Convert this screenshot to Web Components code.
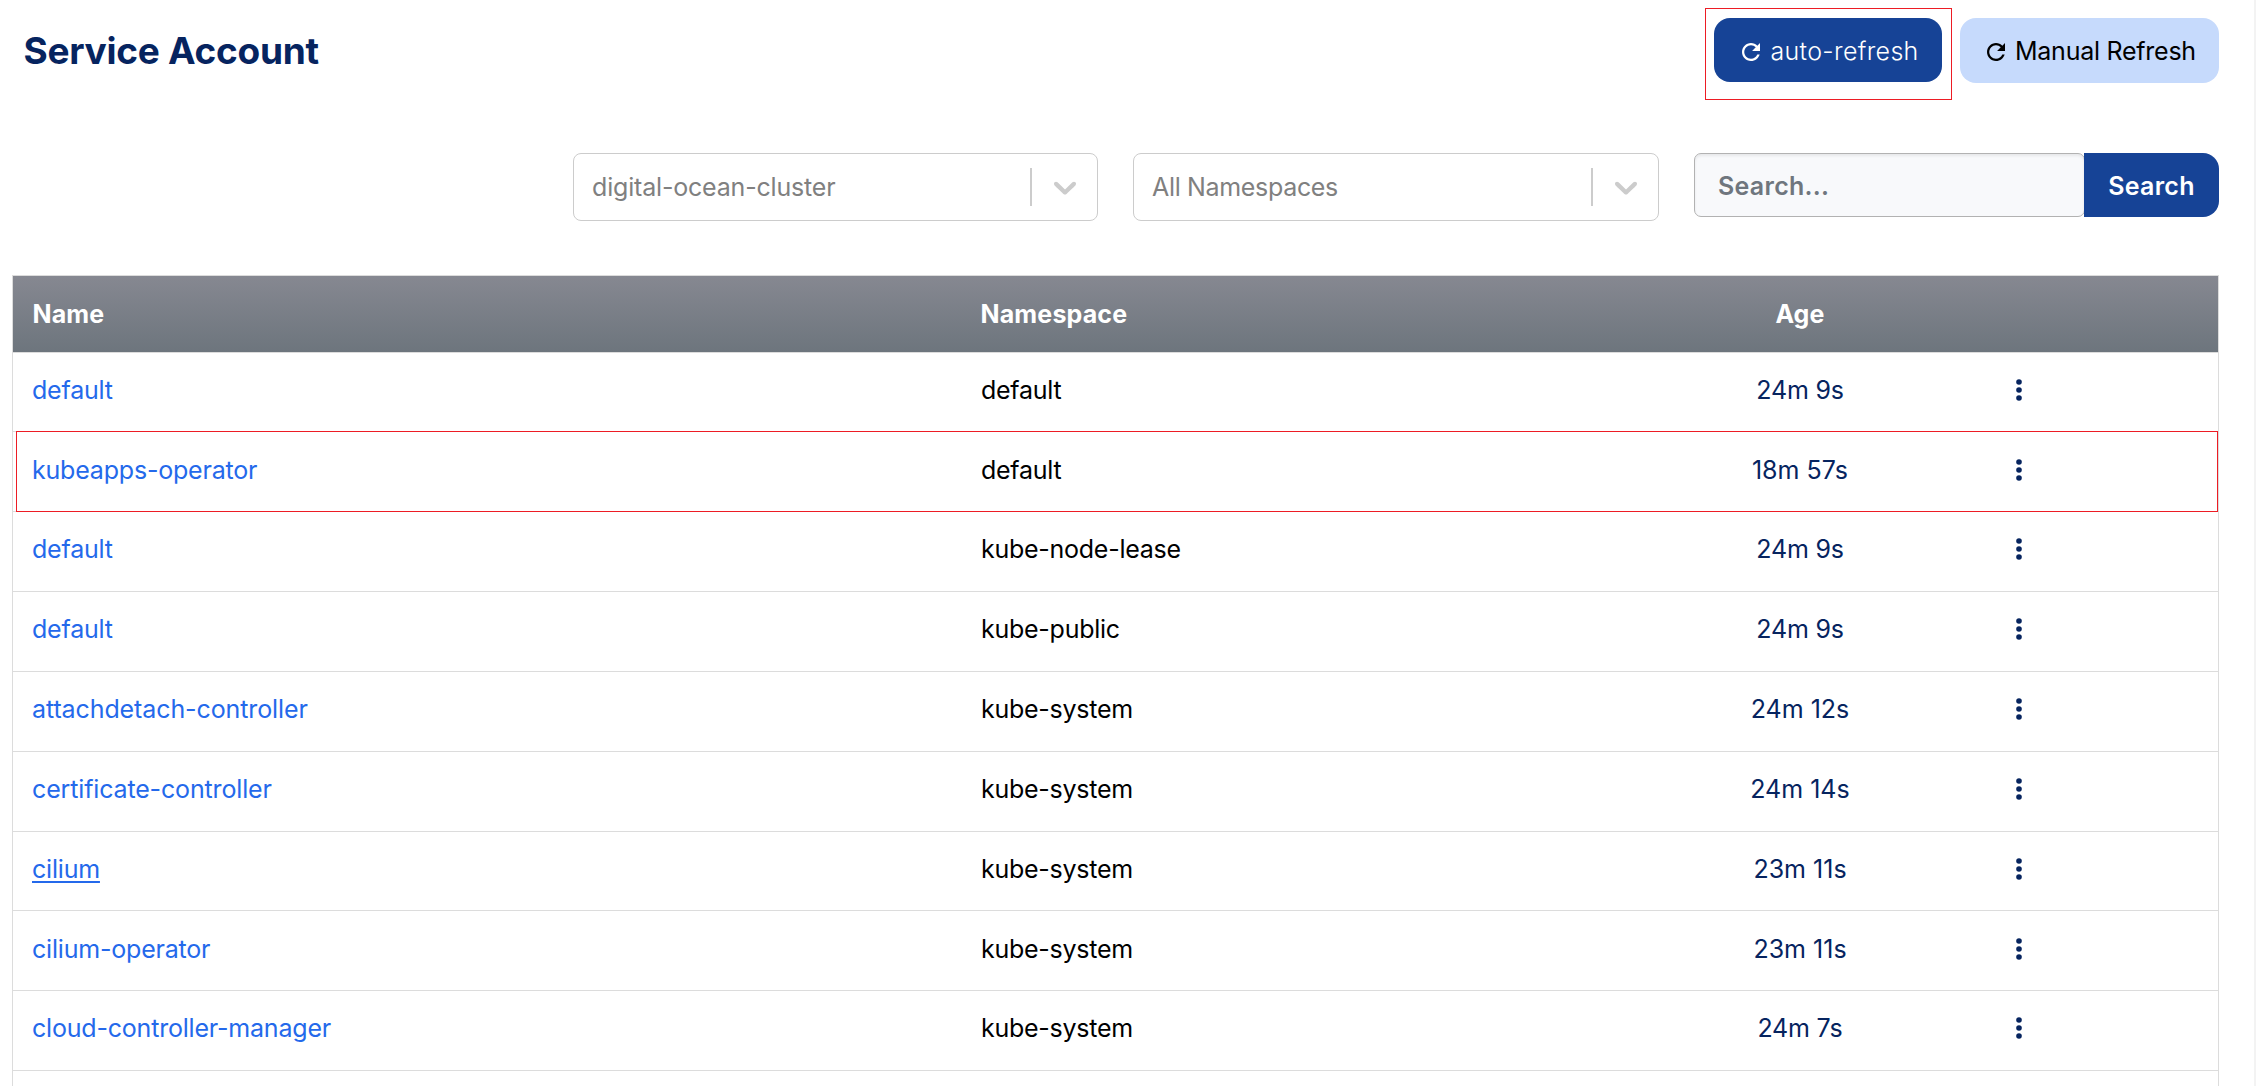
<!DOCTYPE html>
<html lang="en">
<head>
<meta charset="utf-8">
<title>Service Account</title>
<style>
html,body{margin:0;height:100%;overflow:hidden;background:#fff}
body{font-family:Inter,"Liberation Sans",sans-serif;font-size:25px;line-height:40px;color:#000}
</style>
</head>
<body>
<account-page></account-page>
<script>
const define = (name, html, setup) => {
  const t = document.createElement('template');
  t.innerHTML = html;
  customElements.define(name, class extends HTMLElement {
    connectedCallback() {
      if (this.shadowRoot) return;
      const root = this.attachShadow({mode: 'open'});
      root.append(t.content.cloneNode(true));
      if (setup) setup(this, root);
    }
  });
};

define('refresh-icon', `<style>:host{display:block;width:18px;height:18px;flex:none}svg{display:block}</style>
<svg width="18" height="18" viewBox="80 80 352 352" fill="currentColor"><path d="M256 388c-72.597 0-132-59.405-132-132 0-72.601 59.403-132 132-132 36.3 0 69.299 15.4 92.406 39.601L278 234h154V80l-51.698 51.702C348.406 99.798 304.406 80 256 80c-96.797 0-176 79.203-176 176s78.094 176 176 176c81.045 0 148.287-54.134 169.401-128H378.85c-18.745 49.561-67.138 84-122.85 84z"/></svg>`);

define('refresh-button', `<style>
:host{display:block}
button{all:unset;box-sizing:border-box;display:flex;width:228px;height:64px;padding:2px 0 0 28px;align-items:center;border-radius:16px;background:#164396;color:#fff;font-weight:300;letter-spacing:.33px;white-space:nowrap}
span{margin-left:10.5px}
:host([kind=light]) button{width:259px;height:65px;padding:0 0 0 27px;background:#c6dafc;color:#000;font-weight:400;letter-spacing:-.25px}
:host([kind=light]) span{margin-left:10px}
refresh-icon{margin-top:2px}
</style><button><refresh-icon></refresh-icon><span><slot></slot></span></button>`);

define('mark-frame', `<style>:host{display:block;box-sizing:border-box;width:247px;height:92px;border:1px solid #ed1c24;padding:9px 0 0 8px}</style><slot></slot>`);

define('select-box', `<style>
:host{display:flex;box-sizing:border-box;width:525px;height:68px;border:1px solid #ccc;border-radius:8px;align-items:center;color:#808080}
.v{flex:1;padding-left:18px}
i{width:2px;height:38px;background:#ccc}
svg{margin:0 13px 1px 14px}
</style><span class="v"><slot></slot></span><i></i><svg width="38" height="38" viewBox="0 0 20 20" fill="#ccc"><path d="M4.516 7.548c0.436-0.446 1.043-0.481 1.576 0l3.908 3.747 3.908-3.747c0.533-0.481 1.141-0.446 1.574 0 0.436 0.445 0.408 1.197 0 1.615-0.406 0.418-4.695 4.502-4.695 4.502-0.217 0.223-0.502 0.335-0.787 0.335s-0.57-0.112-0.789-0.335c0 0-4.287-4.084-4.695-4.502s-0.436-1.17 0-1.615z"/></svg>`);

define('search-bar', `<style>
:host{display:flex;width:525px;height:64px;font-weight:600;letter-spacing:.28px}
.in{box-sizing:border-box;width:391px;border:1px solid #b2b2b2;border-radius:7px;background:#f8f9fb;box-shadow:inset 0 2px 3px rgba(0,0,0,.07);color:#6f767e;padding:12px 0 0 23px}
.b{box-sizing:border-box;width:135px;height:64px;margin-left:-1px;background:#164396;color:#fff;border-radius:0 16px 16px 0;text-align:center;padding-top:13px}
</style><div class="in">Search...</div><div class="b">Search</div>`);

define('action-menu', `<style>:host{display:block}svg{display:block}</style>
<svg width="8" height="24" viewBox="0 0 8 24" fill="#06245f"><circle cx="4" cy="4" r="2.8"/><circle cx="4" cy="12" r="2.8"/><circle cx="4" cy="20" r="2.8"/></svg>`);

define('account-row', `<style>
:host{display:grid;grid-template-columns:948px 699px 280px 278px;box-sizing:border-box;height:80px;border-top:1px solid #dcdcdc;padding-top:17px;align-items:start;position:relative;letter-spacing:-.2px}
:host([short]){height:79px}
:host([low]){padding-top:18px}
a{padding-left:19px;color:#2469eb}
.n{padding-left:20px;letter-spacing:-.26px}
a span{letter-spacing:var(--ls,-.2px)}
:host([under]) a span{text-decoration:underline;text-decoration-thickness:2px;text-underline-offset:3px}
.age{text-align:center;color:#06245f}
.age.long{letter-spacing:0}
action-menu{margin:8px 0 0 75px}
.mark{display:none;position:absolute;left:3px;right:0;top:-1px;height:81px;box-sizing:border-box;border:1px solid #ed1c24;z-index:1}
:host([marked]) .mark{display:block}
</style><a><span class="nm"></span></a><span class="n"></span><span class="age"></span><action-menu></action-menu><div class="mark"></div>`,
(el, r) => {
  r.querySelector('.nm').textContent = el.getAttribute('name');
  r.querySelector('.n').textContent = el.getAttribute('namespace');
  const age = r.querySelector('.age');
  age.textContent = el.getAttribute('age');
  age.classList.toggle('long', age.textContent.length > 6);
});

define('account-table', `<style>
:host{display:block;box-sizing:border-box;width:2207px;border:1px solid #dcdcdc;border-bottom:0;height:812px}
.h{display:grid;grid-template-columns:948px 699px 280px 278px;height:76px;align-items:center;background:linear-gradient(#868891,#6d757d);color:#fff;font-weight:650;letter-spacing:.15px}
.h span{padding-left:19.5px}.h .c{padding:0;text-align:center}
</style><div class="h"><span>Name</span><span>Namespace</span><span class="c">Age</span></div><slot></slot>`);

define('account-page', `<style>
:host{display:block;box-sizing:border-box;height:1086px;border-right:2px solid #f3f3f3;padding-left:12px;overflow:hidden}
header{display:flex;height:145px;padding-top:8px;width:2207px}
h1{margin:23px auto 0 11.5px;font-size:37px;line-height:40px;font-weight:700;letter-spacing:-.27px;color:#06245f}
refresh-button[kind]{margin:10px 0 0 8px}
.f{display:flex;justify-content:flex-end;width:2207px;height:122px;gap:35px}
</style>
<header><h1>Service Account</h1><mark-frame><refresh-button>auto-refresh</refresh-button></mark-frame><refresh-button kind="light">Manual Refresh</refresh-button></header>
<div class="f"><select-box style="letter-spacing:-.18px">digital-ocean-cluster</select-box><select-box style="letter-spacing:-.33px;width:526px">All Namespaces</select-box><search-bar></search-bar></div>
<account-table>
<account-row short name="default" namespace="default" age="24m 9s"></account-row>
<account-row low marked name="kubeapps-operator" namespace="default" age="18m 57s"></account-row>
<account-row name="default" namespace="kube-node-lease" age="24m 9s"></account-row>
<account-row name="default" namespace="kube-public" age="24m 9s"></account-row>
<account-row style="--ls:-.1px" name="attachdetach-controller" namespace="kube-system" age="24m 12s"></account-row>
<account-row style="--ls:-.15px" name="certificate-controller" namespace="kube-system" age="24m 14s"></account-row>
<account-row short under name="cilium" namespace="kube-system" age="23m 11s"></account-row>
<account-row low name="cilium-operator" namespace="kube-system" age="23m 11s"></account-row>
<account-row name="cloud-controller-manager" namespace="kube-system" age="24m 7s"></account-row>
<account-row></account-row>
</account-table>`);
</script>
</body>
</html>
